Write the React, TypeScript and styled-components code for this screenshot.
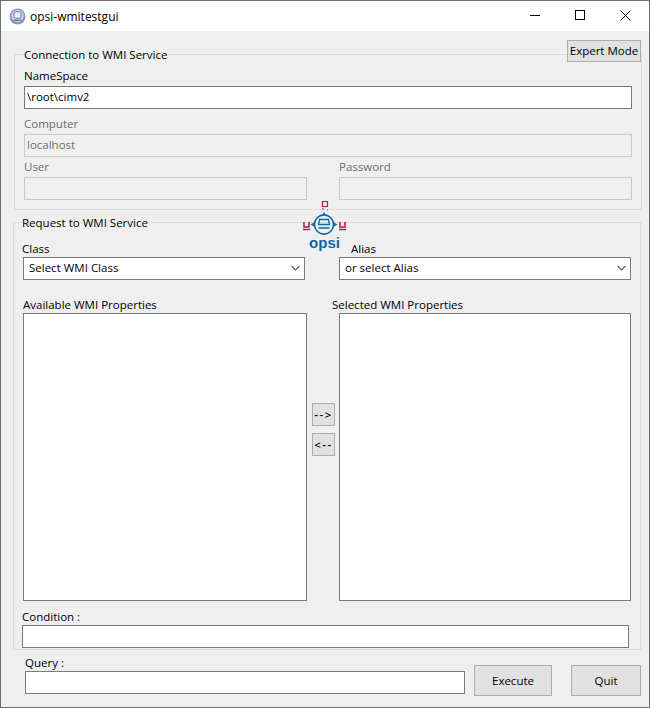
import { createGlobalStyle, styled } from "styled-components";

const GlobalStyle = createGlobalStyle`
  html, body {
    margin: 0;
    padding: 0;
    background: #efefef;
  }
  * {
    box-sizing: border-box;
  }
`;

const Window = styled.div`
  position: relative;
  width: 650px;
  height: 708px;
  border: 1px solid #6f6f6f;
  background: #efefef;
  font-family: "Open Sans", "Noto Sans", sans-serif;
  font-size: 11.5px;
  color: #000;
  overflow: hidden;
`;

const TitleBar = styled.div`
  display: flex;
  align-items: center;
  height: 30px;
  background: #fff;
  padding: 0 1px 0 8px;
`;

const TitleText = styled.span`
  margin-left: 4px;
  flex: 1;
  font-size: 12px;
`;

const WindowButton = styled.div`
  display: flex;
  align-items: center;
  justify-content: center;
  align-self: flex-start;
  width: 45px;
  height: 29px;
`;

const Body = styled.div`
  padding: 23px 0 0 12px;
`;

const Group = styled.fieldset`
  margin: 0;
  width: 628px;
  border: 1px solid #dcdcdc;
  min-width: 0;
`;

const ConnectionGroup = styled(Group)`
  height: 156px;
  margin-left: 1px;
  padding: 13px 9px 0 9px;
`;

const RequestGroup = styled(Group)`
  position: relative;
  height: 428px;
  margin-top: 12px;
  padding: 18px 8px 0 8px;
`;

const Legend = styled.div<{ $top: number; $left: number }>`
  position: absolute;
  top: ${(p) => p.$top}px;
  left: ${(p) => p.$left}px;
  padding: 0 1px;
  height: 18px;
  line-height: 18px;
  background: #efefef;
`;

const GroupFrame = styled.div`
  position: relative;
`;

const Label = styled.div<{ $disabled?: boolean; $indent?: number; $height?: number }>`
  height: ${(p) => p.$height ?? 18}px;
  line-height: 16px;
  color: ${(p) => (p.$disabled ? "#6d6d6d" : "#000")};
  margin-left: ${(p) => p.$indent ?? 0}px;
`;

const TextBox = styled.div<{ $disabled?: boolean; $width?: number }>`
  display: flex;
  align-items: center;
  width: ${(p) => (p.$width ? `${p.$width}px` : "100%")};
  height: 23px;
  padding: 0 0 2px 2px;
  border: 1px solid ${(p) => (p.$disabled ? "#c8c8c8" : "#7a7a7a")};
  background: ${(p) => (p.$disabled ? "#f0f0f0" : "#fff")};
  color: ${(p) => (p.$disabled ? "#6d6d6d" : "#000")};
`;

const FieldStack = styled.div<{ $gap: number }>`
  margin-top: ${(p) => p.$gap}px;
`;

const CredentialRow = styled.div`
  display: flex;
  justify-content: space-between;
  margin-top: 2px;
`;

const Select = styled.div<{ $width: number }>`
  display: flex;
  align-items: center;
  justify-content: space-between;
  width: ${(p) => p.$width}px;
  height: 23px;
  padding: 0 4px 2px 5px;
  border: 1px solid #7a7a7a;
  background: #fff;
`;

const SelectRow = styled.div`
  display: flex;
  padding-left: 1px;
`;

const SelectColumn = styled.div<{ $width: number }>`
  width: ${(p) => p.$width}px;
`;

const ListsRow = styled.div`
  display: flex;
  margin-top: 17px;
  padding-left: 1px;
`;

const ListBox = styled.div`
  height: 288px;
  border: 1px solid #7a7a7a;
  background: #fff;
`;

const ArrowColumn = styled.div`
  display: flex;
  flex-direction: column;
  gap: 7px;
  width: 32px;
  padding: 106px 0 0 5px;
`;

const Button = styled.button<{ $width: number; $height: number }>`
  width: ${(p) => p.$width}px;
  height: ${(p) => p.$height}px;
  padding: 0;
  border: 1px solid #adadad;
  background: #e1e1e1;
  font: inherit;
  color: #000;
`;

const ArrowButton = styled(Button)`
  font-weight: 600;
  letter-spacing: 1.5px;
`;

const ExpertButton = styled(Button)`
  position: absolute;
  z-index: 1;
  top: 39px;
  right: 8px;
  padding-bottom: 2px;
`;

const ConditionLabel = styled(Label)`
  margin-top: 8px;
`;

const BottomRow = styled.div`
  display: flex;
  align-items: flex-end;
  margin: 5px 0 0 12px;
`;

const QueryField = styled.div`
  width: 440px;
  margin-bottom: 2px;
`;

const ExecuteButton = styled(Button)`
  margin-left: 9px;
`;

const QuitButton = styled(Button)`
  margin-left: 19px;
`;

const Logo = styled.div`
  position: absolute;
  z-index: 1;
  top: 200px;
  left: 302px;
  display: flex;
  flex-direction: column;
  align-items: center;
  width: 44px;
`;

const LogoText = styled.span`
  margin: -2px 1px 0 0;
  font-family: "Liberation Sans", sans-serif;
  font-size: 15px;
  font-weight: 700;
  line-height: 14px;
  color: #0b69a8;
`;

const Chevron = () => (
  <svg width="9" height="6" viewBox="0 0 9 6" fill="none" stroke="#555" strokeWidth="1.2">
    <path d="M0.5 0.8 L4.5 4.8 L8.5 0.8" />
  </svg>
);

const AppIcon = () => (
  <svg width="17" height="17" viewBox="0 0 17 17">
    <circle cx="8.5" cy="8.5" r="8" fill="#8794bf" />
    <circle cx="8.5" cy="8" r="6.3" fill="#c9d0e4" />
    <rect x="5" y="3.8" width="7" height="6.4" rx="1.4" fill="#eef0f7" stroke="#6d7aa6" strokeWidth="1" />
    <path d="M4.5 12.4 H12.5" stroke="#6d7aa6" strokeWidth="1.4" />
  </svg>
);

const MinimizeIcon = () => (
  <svg width="11" height="11" viewBox="0 0 11 11">
    <path d="M0 5.5 H10" stroke="#000" strokeWidth="1" />
  </svg>
);

const MaximizeIcon = () => (
  <svg width="11" height="11" viewBox="0 0 11 11" fill="none">
    <rect x="0.5" y="0.5" width="9" height="9" stroke="#000" strokeWidth="1" />
  </svg>
);

const CloseIcon = () => (
  <svg width="11" height="11" viewBox="0 0 11 11">
    <path d="M0.5 0.5 L10.5 10.5 M10.5 0.5 L0.5 10.5" stroke="#000" strokeWidth="1" />
  </svg>
);

const OpsiMark = () => (
  <svg width="44" height="37" viewBox="0 0 44 37" fill="none">
    <rect x="19.5" y="0.5" width="5" height="5" stroke="#c8174f" strokeWidth="1.2" />
    <path d="M19 8 H21 M24 9 H25" stroke="#c8174f" strokeWidth="1" />
    <path
      d="M1 21 V26 H6 V21 M0 28.5 H7 M37 21 V26 H42 V21 M36 28.5 H43"
      stroke="#c8174f"
      strokeWidth="1.6"
    />
    <circle cx="21" cy="23.5" r="9.6" stroke="#0b69a8" strokeWidth="1.6" />
    <path d="M7.5 23.5 L11 21.5 V25.5 Z M34.5 23.5 L31 21.5 V25.5 Z M21 11 L19 14 H23 Z" fill="#0b69a8" />
    <path d="M16.5 18.5 H25.5 L26.5 23.5 H15.5 Z" stroke="#0b69a8" strokeWidth="1.3" />
    <path d="M15.5 27 H26.5" stroke="#0b69a8" strokeWidth="1.5" />
  </svg>
);

export default function App() {
  return (
    <>
      <GlobalStyle />
      <Window>
        <TitleBar>
          <AppIcon />
          <TitleText>opsi-wmitestgui</TitleText>
          <WindowButton>
            <MinimizeIcon />
          </WindowButton>
          <WindowButton>
            <MaximizeIcon />
          </WindowButton>
          <WindowButton>
            <CloseIcon />
          </WindowButton>
        </TitleBar>
        <ExpertButton $width={74} $height={22}>
          Expert Mode
        </ExpertButton>
        <Body>
          <GroupFrame>
            <ConnectionGroup>
              <Legend $top={-8} $left={10}>
                Connection to WMI Service
              </Legend>
              <Label>NameSpace</Label>
              <TextBox>\root\cimv2</TextBox>
              <FieldStack $gap={7}>
                <Label $disabled>Computer</Label>
                <TextBox $disabled>localhost</TextBox>
              </FieldStack>
              <CredentialRow>
                <div>
                  <Label $disabled>User</Label>
                  <TextBox $disabled $width={283} />
                </div>
                <div>
                  <Label $disabled>Password</Label>
                  <TextBox $disabled $width={293} />
                </div>
              </CredentialRow>
            </ConnectionGroup>
          </GroupFrame>
          <RequestGroup>
            <Legend $top={-9} $left={7}>
              Request to WMI Service
            </Legend>
            <SelectRow>
              <SelectColumn $width={316}>
                <Label $indent={-1} $height={16}>
                  Class
                </Label>
                <Select $width={282}>
                  Select WMI Class
                  <Chevron />
                </Select>
              </SelectColumn>
              <SelectColumn $width={292}>
                <Label $indent={12} $height={16}>
                  Alias
                </Label>
                <Select $width={292}>
                  or select Alias
                  <Chevron />
                </Select>
              </SelectColumn>
            </SelectRow>
            <ListsRow>
              <SelectColumn $width={284}>
                <Label $height={16}>Available WMI Properties</Label>
                <ListBox />
              </SelectColumn>
              <ArrowColumn>
                <ArrowButton $width={23} $height={23}>--&gt;</ArrowButton>
                <ArrowButton $width={23} $height={23}>&lt;--</ArrowButton>
              </ArrowColumn>
              <SelectColumn $width={292}>
                <Label $indent={-7} $height={16}>
                  Selected WMI Properties
                </Label>
                <ListBox />
              </SelectColumn>
            </ListsRow>
            <ConditionLabel $height={16}>Condition :</ConditionLabel>
            <TextBox $width={607} />
          </RequestGroup>
          <BottomRow>
            <QueryField>
              <Label $height={16}>Query :</Label>
              <TextBox />
            </QueryField>
            <ExecuteButton $width={78} $height={31}>
              Execute
            </ExecuteButton>
            <QuitButton $width={70} $height={31}>
              Quit
            </QuitButton>
          </BottomRow>
        </Body>
        <Logo>
          <OpsiMark />
          <LogoText>opsi</LogoText>
        </Logo>
      </Window>
    </>
  );
}
